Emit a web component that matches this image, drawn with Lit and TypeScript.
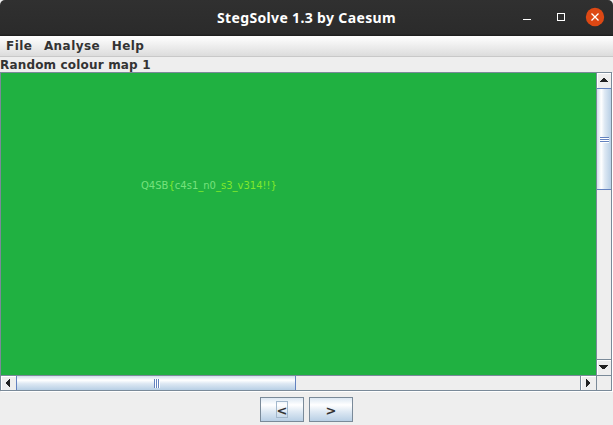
import { LitElement, html, css, svg } from "lit";
import { customElement, property } from "lit/decorators.js";

@customElement("arrow-button")
class ArrowButton extends LitElement {
  @property() dir = "up";
  static styles = css`
    :host { display: block; background: #eee; box-sizing: border-box; box-shadow: inset 1px 1px #fff; overflow: hidden; }
    svg { display: block; fill: #222; shape-rendering: crispEdges; }
  `;
  render() {
    const shapes: Record<string, unknown> = {
      up: svg`<path d="M6 5h2v1h1v1h1v1h1v1H3V8h1V7h1V6h1z"/>`,
      down: svg`<path d="M2 5h9v1h-1v1H9v1H8v1H5V8H4V7H3V6H2z"/>`,
      left: svg`<path d="M8 3h1v8H8v-1H7V9H6V8H5V6h1V5h1V4h1z"/>`,
      right: svg`<path d="M5 3h1v1h1v1h1v1h1v2H8v1H7v1H6v1H5z"/>`,
    };
    return html`<svg width="15" height="15">${shapes[this.dir]}</svg>`;
  }
}

@customElement("app-root")
class AppRoot extends LitElement {
  static styles = css`
    :host { display: flex; flex-direction: column; width: 613px; height: 425px; overflow: hidden; background: #eee; color: #333; font: bold 12px "DejaVu Sans", sans-serif; }
    * { box-sizing: border-box; }
    .title { height: 36px; flex: none; display: grid; grid-template-columns: 1fr auto 1fr; align-items: center; background: linear-gradient(#303030, #2b2b2b 94%, #1c1c1c); color: #fff; border-radius: 5px 5px 0 0; }
    .name { grid-column: 2; font: bold 14px "Noto Sans", sans-serif; white-space: pre; letter-spacing: 0.35px; padding-bottom: 2px; }
    .controls { justify-self: end; display: block; width: 100px; height: 36px; }
    .menu { height: 21px; flex: none; display: flex; gap: 11.5px; padding: 1px 6px 0; line-height: 19px; background: linear-gradient(#fff, #dcdcdc); border-bottom: 1px solid #c8c8c8; letter-spacing: 0.45px; }
    .label { height: 15px; flex: none; line-height: 16px; letter-spacing: 0.17px; white-space: pre; }
    .pane { height: 319px; width: 612px; flex: none; display: grid; grid-template-columns: 595px 15px; grid-template-rows: 302px 15px; border: 1px solid #7a8a99; box-shadow: 1px 1px #fff; }
    .view { background: #20b141; padding: 106px 0 0 140px; font: 10px/14px "DejaVu Sans", sans-serif; white-space: pre; }
    .mint { color: #76e27c; }
    .lime { color: #80e82c; }
    .vbar { display: grid; grid-template-rows: 15px 102px 1fr 16px; border-left: 1px solid #7a8a99; }
    .hbar { display: grid; grid-template-columns: 15px 280px 1fr 16px; border-top: 1px solid #7a8a99; }
    .thumb { display: flex; align-items: center; justify-content: center; border: 1px solid #6382bf; }
    .vbar .thumb { padding-top: 2px; background: linear-gradient(90deg, #d0deeb, #fff 30%, #dde8f3 55%, #b8cfe5); border-right: 0; border-left: 0; }
    .hbar .thumb { padding-left: 2px; background: linear-gradient(#d0deeb, #fff 30%, #dde8f3 55%, #b8cfe5); border-top: 0; border-bottom: 0; }
    .vbar .grip { width: 9px; height: 6px; background: repeating-linear-gradient(#6382bf 0 1px, #fff 1px 2px); }
    .hbar .grip { width: 6px; height: 9px; background: repeating-linear-gradient(90deg, #6382bf 0 1px, #fff 1px 2px); }
    .vbar .end { border-top: 1px solid #7a8a99; }
    .hbar .end { border-left: 1px solid #7a8a99; }
    .corner { border-left: 1px solid #7a8a99; border-top: 1px solid #7a8a99; }
    .buttons { display: flex; justify-content: center; gap: 5px; padding-top: 6px; }
    .btn { width: 44px; height: 25px; display: flex; align-items: center; justify-content: center; border: 1px solid #7a8a99; background: linear-gradient(#dde8f3, #fff 30%, #dde8f3 60%, #b8cfe5); font-size: 13px; }
    .btn span { width: 12px; height: 17px; line-height: 17px; display: flex; justify-content: center; border: 1px solid transparent; }
    .btn .focus { border-color: #a3b8cc; }
  `;
  render() {
    return html`
      <div class="title">
        <div class="name">StegSolve 1.3 by Caesum</div>
        <svg class="controls" viewBox="0 0 100 36">
          <path d="M10 19.5h8" stroke="#fff" fill="none"/>
          <rect x="44.5" y="13.5" width="7" height="7" stroke="#fff" fill="none"/>
          <circle cx="82" cy="17" r="9.2" fill="#dd4814"/>
          <path d="M78.5 13.5l7 7m0-7l-7 7" stroke="#fff" stroke-width="1.3"/>
        </svg>
      </div>
      <div class="menu"><span>File</span><span>Analyse</span><span>Help</span></div>
      <div class="label">Random colour map 1</div>
      <div class="pane">
        <div class="view"><span class="mint">Q4SB</span><span class="lime">{</span><span class="mint">c4s1</span><span class="lime">_</span><span class="mint">n0</span><span class="lime">_s3_v314!!}</span></div>
        <div class="vbar"><arrow-button dir="up"></arrow-button><div class="thumb"><div class="grip"></div></div><div></div><arrow-button class="end" dir="down"></arrow-button></div>
        <div class="hbar"><arrow-button dir="left"></arrow-button><div class="thumb"><div class="grip"></div></div><div></div><arrow-button class="end" dir="right"></arrow-button></div>
        <div class="corner"></div>
      </div>
      <div class="buttons"><div class="btn"><span class="focus">&lt;</span></div><div class="btn"><span>&gt;</span></div></div>
    `;
  }
}
